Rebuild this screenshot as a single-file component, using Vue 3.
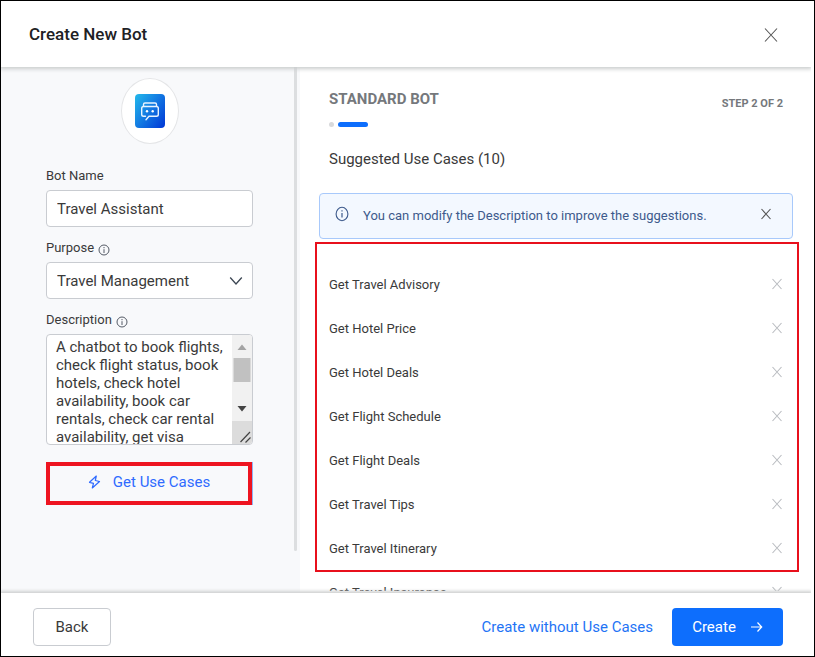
<script setup>
import { ref } from 'vue'

const botName = ref('Travel Assistant')
const purpose = ref('Travel Management')
const description = ref(
  'A chatbot to book flights, check flight status, book hotels, check hotel availability, book car rentals, check car rental availability, get visa'
)
const noticeOpen = ref(true)
const useCases = ref([
  'Get Travel Advisory',
  'Get Hotel Price',
  'Get Hotel Deals',
  'Get Flight Schedule',
  'Get Flight Deals',
  'Get Travel Tips',
  'Get Travel Itinerary',
  'Get Travel Insurance'
])

function removeCase(name) {
  useCases.value = useCases.value.filter((item) => item !== name)
}
</script>

<template>
  <div class="dialog">
    <header class="head">
      <h1>Create New Bot</h1>
      <button class="icon-btn" type="button" aria-label="Close">
        <svg width="14" height="16" viewBox="0 0 14 16"><path d="M1 1.5 13 14.500M13 1.500 1 14.500" stroke="#555" stroke-width="1.100" /></svg>
      </button>
    </header>

    <div class="body">
      <aside class="side">
        <form class="form" @submit.prevent>
          <div class="avatar">
            <svg width="30" height="34" viewBox="0 0 30 34">
              <defs>
                <linearGradient id="tile" x1="0" y1="0.1" x2="1" y2="0.9">
                  <stop offset="0" stop-color="#22b4ea" />
                  <stop offset="0.5" stop-color="#1277e2" />
                  <stop offset="1" stop-color="#023bd6" />
                </linearGradient>
              </defs>
              <rect width="30" height="34" rx="4" fill="url(#tile)" />
              <g fill="none" stroke="#e8f4ff" stroke-width="1.400" stroke-linejoin="round" stroke-linecap="round">
                <path d="M8.500 12V10.500Q8.500 9 10 9H20Q21.500 9 21.500 10.500V12" />
                <path d="M10.500 22.300H8.500Q6.700 22.300 6.700 20.500V14.300Q6.700 12.500 8.500 12.500H21.500Q23.300 12.500 23.300 14.300V20.500Q23.300 22.300 21.500 22.300H14L11 25.800" />
              </g>
              <circle cx="12" cy="17.300" r="1.200" fill="#fff" />
              <circle cx="17.700" cy="17.300" r="1.200" fill="#fff" />
            </svg>
          </div>

          <div class="field">
            <label for="bot-name">Bot Name</label>
            <input id="bot-name" v-model="botName" class="control" type="text" />
          </div>

          <div class="field">
            <label for="purpose">
              Purpose
              <svg class="info" width="12" height="12" viewBox="0 0 12 12"><circle cx="6" cy="6" r="5" /><path d="M6 5.200V9M6 3V4.200" /></svg>
            </label>
            <div class="select-wrap">
              <select id="purpose" v-model="purpose" class="control">
                <option>Travel Management</option>
              </select>
              <svg class="chevron" width="14" height="10" viewBox="0 0 14 10"><path d="M1.200 1.500 7 8 12.800 1.500" fill="none" stroke="#3c4653" stroke-width="1.300" /></svg>
            </div>
          </div>

          <div class="field">
            <label for="description">
              Description
              <svg class="info" width="12" height="12" viewBox="0 0 12 12"><circle cx="6" cy="6" r="5" /><path d="M6 5.200V9M6 3V4.200" /></svg>
            </label>
            <div class="area">
              <textarea id="description" v-model="description"></textarea>
              <svg class="scroll" width="20" height="109" viewBox="0 0 20 109" aria-hidden="true">
                <rect width="20" height="109" fill="#f1f1f1" />
                <path d="M5.500 15 10 9.500 14.500 15Z" fill="#a3a3a3" />
                <rect x="1.500" y="23" width="17" height="24" fill="#c1c1c1" />
                <path d="M5.500 71H14.500L10 76.500Z" fill="#444" />
                <rect y="86" width="20" height="23" fill="#dcdcdc" />
                <path d="M8.500 107 18 97M13.500 107.500 18.500 102.500" stroke="#444" stroke-width="1.200" />
              </svg>
            </div>
          </div>

          <div class="generate">
            <button type="button">
              <svg width="13" height="14" viewBox="0 0 13 14"><path d="M8.300 1 1.500 7.300 5.500 8.300 4.300 13 11.500 6.500 7.300 5.500Z" fill="none" stroke="#2f6bff" stroke-width="1.200" stroke-linejoin="round" /></svg>
              Get Use Cases
            </button>
          </div>
        </form>
        <div class="side-bar"></div>
      </aside>

      <main class="main">
        <div class="title-row">
          <h2>STANDARD BOT</h2>
          <span class="step">STEP 2 OF 2</span>
        </div>
        <div class="progress"><i class="dot"></i><i class="bar"></i></div>
        <h3>Suggested Use Cases (10)</h3>

        <div v-if="noticeOpen" class="notice">
          <svg width="14" height="16" viewBox="0 0 14 16"><ellipse cx="7" cy="8" rx="5.900" ry="6.700" fill="none" stroke="#3d5a8c" stroke-width="1.100" /><path d="M7 7V11.500M7 4.300V5.600" stroke="#3d5a8c" stroke-width="1.200" /></svg>
          <p>You can modify the Description to improve the suggestions.</p>
          <button class="icon-btn" type="button" aria-label="Dismiss" @click="noticeOpen = false">
            <svg width="12" height="12" viewBox="0 0 12 12"><path d="M1.500 1 10.500 11M10.500 1 1.500 11" stroke="#555" stroke-width="1.100" /></svg>
          </button>
        </div>

        <div class="cases">
          <ul>
            <li v-for="item in useCases" :key="item">
              <span>{{ item }}</span>
              <button class="icon-btn" type="button" :aria-label="`Remove ${item}`" @click="removeCase(item)">
                <svg width="12" height="12" viewBox="0 0 12 12"><path d="M1.500 1 10.500 11M10.500 1 1.500 11" stroke="#b9bcc0" stroke-width="1.100" /></svg>
              </button>
            </li>
          </ul>
          <div class="highlight"></div>
        </div>
      </main>
    </div>

    <footer class="foot">
      <button class="back" type="button">Back</button>
      <a class="skip" href="#">Create without Use Cases</a>
      <button class="create" type="button">
        Create
        <svg width="13" height="12" viewBox="0 0 13 12"><path d="M1 6H11.500M7.500 1.500 11.700 6 7.500 10.500" fill="none" stroke="#fff" stroke-width="1.200" /></svg>
      </button>
    </footer>
  </div>
</template>

<style>
body {
  margin: 0;
}
</style>

<style scoped>
* {
  box-sizing: border-box;
}

.dialog {
  display: flex;
  flex-direction: column;
  height: 100vh;
  border: 1px solid #000;
  padding-right: 3px;
  background: #fff;
  color: #3a3a3a;
  font-family: Roboto, Inter, sans-serif;
  font-size: 15px;
}

h1, h2, h3, p, ul {
  margin: 0;
  padding: 0;
}

button, input, select, textarea {
  font: inherit;
  color: inherit;
}

.icon-btn {
  display: flex;
  padding: 0;
  border: 0;
  background: none;
}

.head {
  position: relative;
  z-index: 1;
  display: flex;
  align-items: center;
  justify-content: space-between;
  flex: none;
  height: 66px;
  padding: 2px 33px 0 28px;
  background: #fff;
  box-shadow: 0 1px 4px 1px #c9cccc;
  clip-path: inset(0 0 -8px 0);
}

h1 {
  padding-bottom: 2px;
  color: #202124;
  font-size: 17px;
  font-weight: 500;
}

.body {
  display: flex;
  flex: 1;
  min-height: 0;
  overflow: hidden;
}

.side {
  display: flex;
  flex: none;
  justify-content: space-between;
  width: 299px;
  padding: 0 3px 0 45px;
  background: #f8f9fb;
}

.form {
  display: flex;
  flex-direction: column;
  gap: 11px;
  width: 207px;
  padding-top: 11px;
}

.side-bar {
  width: 3px;
  height: 484px;
  border-radius: 0 0 2px 2px;
  background: #dcdee0;
}

.avatar {
  display: flex;
  align-items: center;
  justify-content: center;
  align-self: center;
  width: 58px;
  height: 66px;
  margin-bottom: 11px;
  border: 1px solid #e4e5e7;
  border-radius: 50%;
  background: #fff;
}

.field {
  display: flex;
  flex-direction: column;
  gap: 4px;
}

label {
  display: flex;
  align-items: center;
  gap: 4px;
  height: 20px;
  padding-bottom: 1px;
  font-size: 13px;
}

.info {
  margin-top: 4px;
  fill: none;
  stroke: #555b66;
  stroke-width: 1;
}

.control {
  width: 100%;
  height: 37px;
  padding: 0 10px;
  border: 1px solid #c9ccd1;
  border-radius: 4px;
  background: #fff;
  appearance: none;
}

.select-wrap {
  display: grid;
  align-items: center;
}

.select-wrap > * {
  grid-area: 1 / 1;
}

.chevron {
  justify-self: end;
  margin-right: 10px;
  pointer-events: none;
}

.area {
  display: flex;
  height: 111px;
  overflow: hidden;
  border: 1px solid #c9ccd1;
  border-radius: 4px;
  background: #fff;
}

textarea {
  flex: 1;
  min-width: 0;
  padding: 3px 4px 0 9px;
  border: 0;
  background: none;
  line-height: 18px;
  resize: none;
  overflow: hidden;
}

.scroll {
  flex: none;
}

.generate {
  margin: 6px 1px 0 0;
  border: 4px solid #ee1420;
  box-shadow: 1px 0 0 #8fb4f5;
}

.generate button {
  display: flex;
  align-items: center;
  justify-content: center;
  gap: 12px;
  width: 100%;
  height: 35px;
  padding: 0 0 4px;
  border: 0;
  background: #f8f9fb;
  color: #2f6bff;
}

.main {
  display: flex;
  flex: 1;
  flex-direction: column;
  min-width: 0;
  padding: 20px 18px 0 19px;
}

.title-row {
  display: flex;
  align-items: center;
  justify-content: space-between;
  height: 24px;
  padding: 0 10px;
  color: #75787c;
}

h2 {
  font-size: 15px;
  font-weight: 700;
}

.step {
  padding-top: 8px;
  font-size: 11px;
  font-weight: 700;
}

.progress {
  display: flex;
  gap: 4px;
  margin: 11px 10px 0;
}

.dot {
  width: 5px;
  height: 5px;
  border-radius: 50%;
  background: #d8d9db;
}

.bar {
  width: 30px;
  height: 5px;
  border-radius: 3px;
  background: #0d6efd;
}

h3 {
  height: 24px;
  margin: 20px 10px 22px;
  font-size: 15px;
  font-weight: 400;
  line-height: 24px;
}

.notice {
  display: flex;
  align-items: center;
  flex: none;
  height: 46px;
  padding: 0 20px 4px 15px;
  border: 1px solid #a8c9fb;
  border-radius: 4px;
  background: #f3f8ff;
  color: #3d5a8c;
  font-size: 13px;
}

.notice p {
  flex: 1;
  margin: 2px 0 0 14px;
}

.cases {
  position: relative;
  flex: 1;
  min-height: 0;
  padding: 23px 0 2px;
}

ul {
  height: 100%;
  overflow: hidden;
  list-style: none;
}

li {
  display: flex;
  align-items: center;
  justify-content: space-between;
  height: 44px;
  padding: 0 10px;
  font-size: 13px;
}

.highlight {
  position: absolute;
  inset: 3px -6px auto -4px;
  height: 330px;
  border: 2px solid #e8101c;
  pointer-events: none;
}

.foot {
  position: relative;
  z-index: 1;
  display: flex;
  align-items: center;
  flex: none;
  height: 63px;
  padding: 5px 28px 0 32px;
  background: #fff;
  box-shadow: 0 -1px 3px 1px #cfd1d1;
  clip-path: inset(-8px 0 0 0);
}

.back {
  width: 78px;
  height: 38px;
  border: 1px solid #c9ccd1;
  border-radius: 4px;
  background: #fff;
}

.skip {
  margin: 0 19px 0 auto;
  color: #1f74f5;
  text-decoration: none;
}

.create {
  display: flex;
  align-items: center;
  justify-content: center;
  gap: 14px;
  width: 111px;
  height: 38px;
  padding: 0;
  border: 0;
  border-radius: 4px;
  background: #0d6efd;
  color: #fff;
}
</style>
